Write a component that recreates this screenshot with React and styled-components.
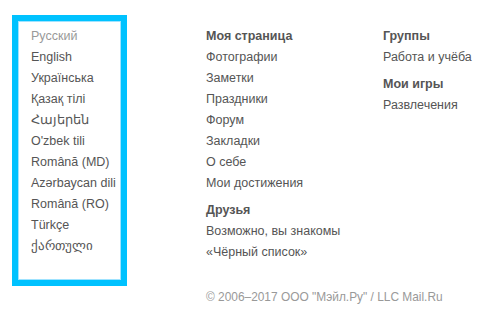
import React from "react";
import styled, { createGlobalStyle } from "styled-components";

const GlobalStyle = createGlobalStyle`
  body {
    margin: 0;
    background: #fff;
    font-family: "Liberation Sans", Arial, sans-serif;
  }
`;

const Page = styled.div`
  display: flex;
  align-items: flex-start;
  padding: 15px 0 0 12px;
  width: 493px;
  height: 327px;
  box-sizing: border-box;
`;

const LangBox = styled.ul`
  list-style: none;
  margin: 0;
  width: 115px;
  height: 271px;
  box-sizing: border-box;
  border: 6px solid #00c2ff;
  box-shadow: inset 0 0 0 1px #9fe3ff;
  padding: 5px 0 0 13px;
`;

const LangItem = styled.li`
  font-size: 12.5px;
  line-height: 21px;
  color: ${(props) => (props.current ? "#999" : "#555")};
  white-space: nowrap;
`;

const Main = styled.div`
  display: flex;
  flex-direction: column;
  margin-left: 79px;
`;

const Columns = styled.div`
  display: flex;
`;

const Column = styled.div`
  width: ${(props) => props.width}px;
  padding-top: 11px;
`;

const Group = styled.div`
  & + & {
    margin-top: 6px;
  }
`;

const Heading = styled.div`
  font-size: 12.5px;
  line-height: 21px;
  font-weight: bold;
  color: #555;
`;

const Link = styled.div`
  font-size: 12.5px;
  line-height: 21px;
  color: #555;
  white-space: nowrap;
`;

const Copyright = styled.div`
  margin-top: 24px;
  font-size: 11.9px;
  line-height: 21px;
  color: #999;
  white-space: nowrap;
`;

const languages = [
  "Русский",
  "English",
  "Українська",
  "Қазақ тілі",
  "Հայերեն",
  "O'zbek tili",
  "Română (MD)",
  "Azərbaycan dili",
  "Română (RO)",
  "Türkçe",
  "ქართული",
];

const App = () => {
  return (
    <>
      <GlobalStyle />
      <Page>
        <LangBox>
          {languages.map((lang, i) => (
            <LangItem key={lang} current={i === 0}>
              {lang}
            </LangItem>
          ))}
        </LangBox>
        <Main>
          <Columns>
            <Column width={177}>
              <Group>
                <Heading>Моя страница</Heading>
                <Link>Фотографии</Link>
                <Link>Заметки</Link>
                <Link>Праздники</Link>
                <Link>Форум</Link>
                <Link>Закладки</Link>
                <Link>О себе</Link>
                <Link>Мои достижения</Link>
              </Group>
              <Group>
                <Heading>Друзья</Heading>
                <Link>Возможно, вы знакомы</Link>
                <Link>«Чёрный список»</Link>
              </Group>
            </Column>
            <Column width={100}>
              <Group>
                <Heading>Группы</Heading>
                <Link>Работа и учёба</Link>
              </Group>
              <Group>
                <Heading>Мои игры</Heading>
                <Link>Развлечения</Link>
              </Group>
            </Column>
          </Columns>
          <Copyright>© 2006–2017 ООО "Мэйл.Ру" / LLC Mail.Ru</Copyright>
        </Main>
      </Page>
    </>
  );
};

export default App;
